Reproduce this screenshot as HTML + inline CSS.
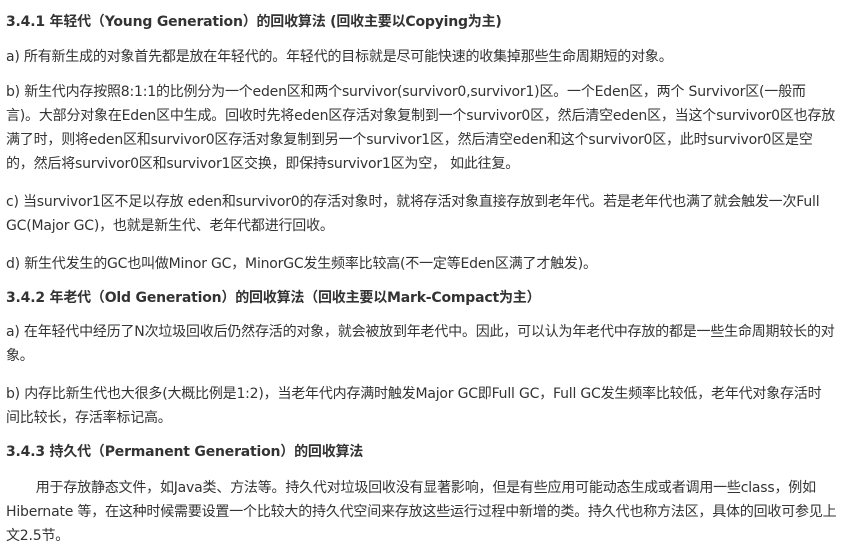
<!DOCTYPE html>
<html><head><meta charset="utf-8"><style>
body{margin:0;width:857px;height:543px;background:#fff;overflow:hidden;position:relative;font-family:"DejaVu Sans","Noto Sans CJK SC",sans-serif;font-size:14px;color:#333;}
p{position:absolute;left:6px;margin:0;line-height:24px;white-space:nowrap;letter-spacing:-0.2px}
.h{font-weight:bold;}
</style></head><body>
<p class="h" style="top:10px">3.4.1 年轻代（Young Generation）的回收算法 (回收主要以Copying为主)</p>
<p style="top:45px">a) 所有新生成的对象首先都是放在年轻代的。年轻代的目标就是尽可能快速的收集掉那些生命周期短的对象。</p>
<p style="top:80px">b) 新生代内存按照8:1:1的比例分为一个eden区和两个survivor(survivor0,survivor1)区。一个Eden区，两个 Survivor区(一般而<br>言)。大部分对象在Eden区中生成。回收时先将eden区存活对象复制到一个survivor0区，然后清空eden区，当这个survivor0区也存放<br>满了时，则将eden区和survivor0区存活对象复制到另一个survivor1区，然后清空eden和这个survivor0区，此时survivor0区是空<br>的，然后将survivor0区和survivor1区交换，即保持survivor1区为空， 如此往复。</p>
<p style="top:190px">c) 当survivor1区不足以存放 eden和survivor0的存活对象时，就将存活对象直接存放到老年代。若是老年代也满了就会触发一次Full<br>GC(Major GC)，也就是新生代、老年代都进行回收。</p>
<p style="top:252px">d) 新生代发生的GC也叫做Minor GC，MinorGC发生频率比较高(不一定等Eden区满了才触发)。</p>
<p class="h" style="top:286px">3.4.2 年老代（Old Generation）的回收算法（回收主要以Mark-Compact为主）</p>
<p style="top:320px">a) 在年轻代中经历了N次垃圾回收后仍然存活的对象，就会被放到年老代中。因此，可以认为年老代中存放的都是一些生命周期较长的对<br>象。</p>
<p style="top:382px">b) 内存比新生代也大很多(大概比例是1:2)，当老年代内存满时触发Major GC即Full GC，Full GC发生频率比较低，老年代对象存活时<br>间比较长，存活率标记高。</p>
<p class="h" style="top:440px">3.4.3 持久代（Permanent Generation）的回收算法</p>
<p style="top:476px">&nbsp;&nbsp;&nbsp;&nbsp;&nbsp;&nbsp;&nbsp;用于存放静态文件，如Java类、方法等。持久代对垃圾回收没有显著影响，但是有些应用可能动态生成或者调用一些class，例如<br>Hibernate 等，在这种时候需要设置一个比较大的持久代空间来存放这些运行过程中新增的类。持久代也称方法区，具体的回收可参见上<br>文2.5节。</p>
</body></html>
